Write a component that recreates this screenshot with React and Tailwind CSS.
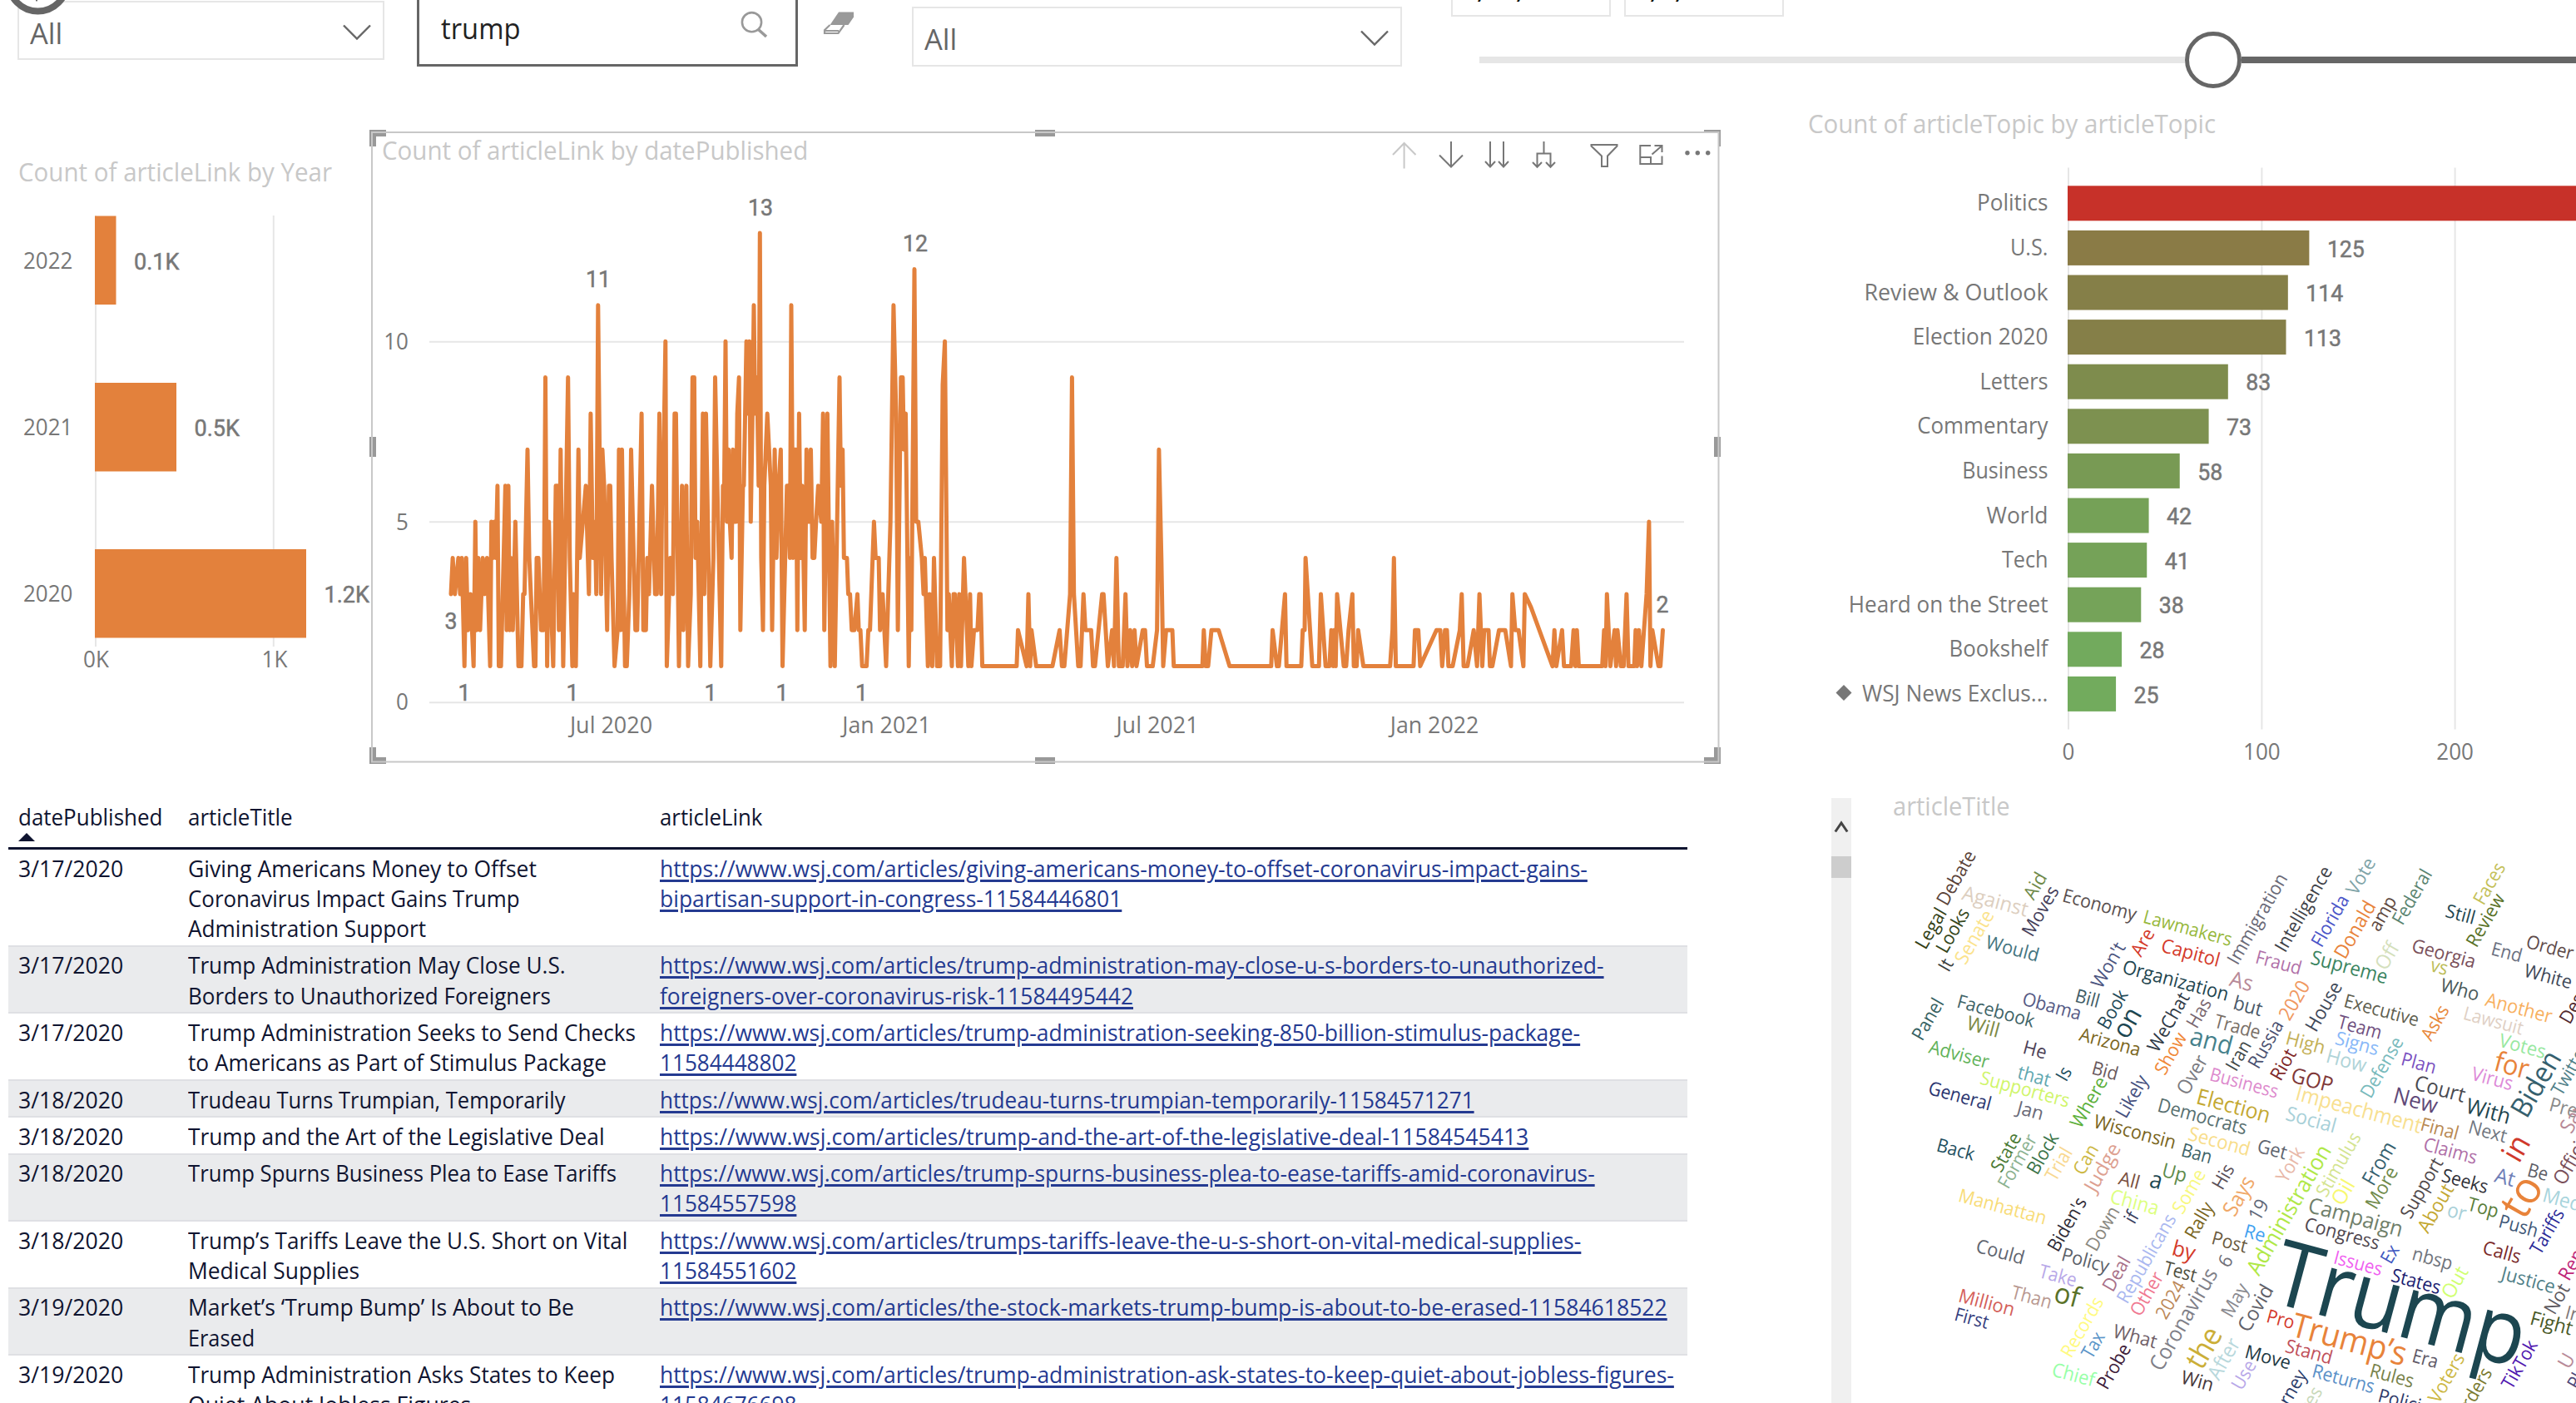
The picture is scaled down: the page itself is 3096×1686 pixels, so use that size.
import React, { useLayoutEffect, useRef, useState } from "react";

// Advance widths (em) of the report's UI typeface.
const ADV = {
  " ": 0.274, "&": 0.8, "'": 0.23, "’": 0.23, "‘": 0.23, ",": 0.217, "-": 0.4, ".": 0.217, "/": 0.39, ":": 0.217,
  A: 0.645, B: 0.573, C: 0.619, D: 0.701, E: 0.506, F: 0.488, G: 0.687, H: 0.71, I: 0.266, J: 0.357, K: 0.58, L: 0.471,
  M: 0.898, N: 0.748, O: 0.754, P: 0.56, Q: 0.754, R: 0.598, S: 0.531, T: 0.524, U: 0.687, V: 0.621, W: 0.934, X: 0.59,
  Y: 0.553, Z: 0.57,
  a: 0.509, b: 0.588, c: 0.462, d: 0.589, e: 0.523, f: 0.313, g: 0.589, h: 0.566, i: 0.242, j: 0.242, k: 0.497, l: 0.242,
  m: 0.861, n: 0.566, o: 0.586, p: 0.588, q: 0.589, r: 0.348, s: 0.424, t: 0.339, u: 0.566, v: 0.479, w: 0.723, x: 0.459,
  y: 0.484, z: 0.452,
};
const KERN = { Tr: -0.045, To: -0.06, Te: -0.06, Ta: -0.06, Tu: -0.04, Ye: -0.04, Yo: -0.05, Wo: -0.02, We: -0.02 };
const em = (s) => {
  let w = 0;
  for (let i = 0; i < s.length; i++) w += (ADV[s[i]] ?? 0.539) + (KERN[s.slice(i, i + 2)] ?? 0);
  return w;
};

// One line of text, condensed to the typeface's advance widths.
function Line({ children, className = "" }) {
  const ref = useRef(null);
  const [k, setK] = useState(1);
  useLayoutEffect(() => {
    const el = ref.current;
    const size = parseFloat(getComputedStyle(el).fontSize);
    setK((em(children) * size) / el.offsetWidth);
  }, [children]);
  return (
    <span className="block whitespace-nowrap">
      <span ref={ref} className={"inline-block origin-left " + className} style={{ transform: `scaleX(${k})` }}>
        {children}
      </span>
    </span>
  );
}

// SVG text in the UI typeface.
function T({ x, y, size = 27.6, anchor = "start", fill = "#777777", children }) {
  return (
    <text x={x} y={y} fontSize={size} textAnchor={anchor} fill={fill} textLength={em(children) * size} lengthAdjust="spacingAndGlyphs">
      {children}
    </text>
  );
}

// SVG data label in the numeric typeface.
function Num({ x, y, anchor = "start", children }) {
  const w = [...children].reduce((a, c) => a + (c === "." ? 7.5 : c === "K" ? 17 : 15), 0);
  return (
    <text
      x={x}
      y={y}
      fontSize="28"
      textAnchor={anchor}
      fill="#777777"
      stroke="#777777"
      strokeWidth="0.5"
      textLength={w}
      lengthAdjust="spacingAndGlyphs"
      className="font-['Roboto',sans-serif]"
    >
      {children}
    </text>
  );
}

function Chevron({ className }) {
  return (
    <svg className={className} width="34" height="20" viewBox="0 0 34 20" fill="none" stroke="#666666" strokeWidth="2.4">
      <path d="M1 1.5 17 17.5 33 1.5" />
    </svg>
  );
}

function Dropdown({ className }) {
  return (
    <div className={"flex shrink-0 items-start justify-between border-2 border-[#e6e6e6] bg-white pl-[13px] pr-[14px] " + className}>
      <div className="mt-[17px] text-[34.5px] leading-[40px] text-[#666666]">
        <Line>All</Line>
      </div>
      <Chevron className="mt-[26px]" />
    </div>
  );
}

function Header() {
  return (
    <div className="flex h-[110px] items-start">
      <div className="relative ml-[21px] shrink-0">
        <Dropdown className="mt-px h-[71px] w-[441px]" />
        <svg className="absolute left-[-16px] top-0" width="80" height="20" viewBox="5 0 80 20">
          <circle cx="45.5" cy="-21.5" r="35" fill="#fff" stroke="#666666" strokeWidth="8" />
          <rect x="43" y="0" width="2" height="1.4" fill="#666666" />
        </svg>
      </div>
      <div className="ml-[39px] flex h-[80px] w-[458px] shrink-0 items-start justify-between border-[3px] border-t-0 border-[#666666] pl-[26px] pr-[33px]">
        <div className="mt-[13px] text-[35.5px] leading-[40px] text-[#222222]">
          <Line>trump</Line>
        </div>
        <svg className="mt-[12px]" width="34" height="36" viewBox="889 12 34 36" fill="none" stroke="#999999">
          <circle cx="903.5" cy="26.7" r="11.6" strokeWidth="2.6" />
          <path d="M911.5 35.5 921 44" strokeWidth="3.6" />
        </svg>
      </div>
      <svg className="ml-[30px] mt-[13px] shrink-0" width="38" height="30" viewBox="989 13 38 30">
        <path d="M1008 14.5H1026V20.5L1019.5 30H997.5Z" fill="#999999" />
        <path d="M997.5 30 991 36.2V40H1007.5L1014.5 30M991 37H1008" fill="none" stroke="#999999" strokeWidth="2.2" />
      </svg>
      <Dropdown className="ml-[69px] mt-[8px] h-[72px] w-[589px]" />
      <div className="ml-[59px] flex w-[1352px] shrink-0 flex-col">
        <div className="flex h-[20px] gap-[16px] text-[32px] leading-[40px] text-black">
          {["3/17/2020", "6/1/2022"].map((d) => (
            <div key={d} className="h-[20px] w-[192px] overflow-hidden border-2 border-t-0 border-[#e6e6e6] pl-[14px]">
              <div className="-mt-[34px] flex">
                {[...d].map((c, i) =>
                  c === "/" ? (
                    <span key={i} className="w-[12.5px] translate-y-[4px] -skew-x-6">/</span>
                  ) : (
                    <span key={i} className="w-[17.2px]">{c}</span>
                  ),
                )}
              </div>
            </div>
          ))}
        </div>
        <div className="mt-[17px] flex h-[69px] items-center pl-[34px]">
          <div className="h-[8px] w-[848px] bg-[#e6e6e6]" />
          <div className="h-[68px] w-[68px] rounded-full border-[5px] border-[#666666] bg-white" />
          <div className="h-[8px] flex-1 bg-[#666666]" />
        </div>
      </div>
    </div>
  );
}

function YearChart() {
  const bars = [
    ["2022", 259.5, 25.5, "0.1K"],
    ["2021", 460, 98, "0.5K"],
    ["2020", 660, 254, "1.2K"],
  ];
  return (
    <div className="w-[444px] shrink-0">
      <div className="mb-[-1px] ml-[22px] mt-[76px] text-[31.2px] leading-[40px] text-[#c8c8c8]">
        <Line>Count of articleLink by Year</Line>
      </div>
      <svg width="446" height="600" viewBox="0 225 446 600" className="font-['Open_Sans','Noto_Sans',sans-serif]">
        <path d="M115 259V777M328.8 259V777" stroke="#e6e6e6" strokeWidth="2" />
        {bars.map(([year, y, w, v]) => (
          <g key={year}>
            <rect x="114" y={y} width={w} height="106.5" fill="#e3813c" />
            <T x={28} y={y + 63.2}>{year}</T>
            <Num x={114 + w + 21.5} y={y + 64}>{v}</Num>
          </g>
        ))}
        <T x={115.5} y={802} anchor="middle">0K</T>
        <T x={330} y={802} anchor="middle">1K</T>
      </svg>
    </div>
  );
}

// [x, count] pairs of the daily series, first in the 2020–early 2021 part.
const EARLY =
  "195:3 199:4 204:3 212:4 216:3 220:4 226:1 230:4 234:2 240:3 247:1 251:5 254:2 258:4 262:2 268:4 272:3 278:4 285:1 288:5 292:4 295:5 298:4 302:6 305:1 310:1 320:6 323:2 327:6 330:2 333:4 337:2 343:5 350:1 357:1 361:3 364:3 371:7 375:4 386:1 389:1 392:4 396:4 402:2 408:2 412:9 416:1 420:5 424:3 430:1 436:6 440:6 443:2 447:7 453:1 464:9 468:4 474:1 477:3 482:1 488:7 491:4 498:5 505:6 512:3 516:8 521:4 526:5 529:3 533:11 540:3 543:7 547:6 554:2 558:6 561:6 564:4 571:1 578:2 581:7 585:2 588:7 595:1 599:1 605:3 609:7 619:2 623:2 633:8 637:2 643:2 646:4 650:3 657:6 664:3 668:3 674:8 678:3 681:7 684:7 688:10 691:1 699:4 705:3 709:8 712:8 719:1 726:6 729:2 736:6 740:1 746:3 750:9 754:9 757:4 761:5 768:1 774:8 777:3 781:8 791:1 798:4 802:9 807:6 816:1 820:6 823:6 826:10 829:5 833:7 836:5 840:4 843:7 847:5 850:5 853:8 857:9 860:2 866:6 868:6 874:10 878:8 881:10 884:5 888:8 891:11 894:8 898:9 902:6 905:13 908:4 912:2 915:6 922:8 930:6 933:2 939:7 943:4 948:6 953:7 957:1 967:6 970:6 974:4 977:11 981:4 984:7 988:7 991:2 995:8 999:4 1002:6 1008:2 1012:7 1017:5 1022:7 1026:4 1030:4 1034:5 1039:6 1046:5 1050:8 1053:2 1060:8 1067:1 1071:5 1077:1 1088:9 1091:6 1095:7 1098:4 1105:4 1108:3 1112:3 1116:2 1122:2 1129:3 1132:2 1136:2 1140:1 1150:1 1154:2 1158:2 1167:5 1171:4 1178:4 1181:2 1187:3 1195:1 1205:5 1212:11 1218:8 1222:2 1229:9 1233:9 1236:7 1240:8 1247:1 1250:4 1253:2 1260:12 1264:5 1269:5 1277:4 1281:3 1284:4 1291:1 1295:3 1301:1 1305:4 1312:1 1319:1 1325:8.8 1330:10 1336:2 1339:3 1346:1 1350:3 1353:3 1360:1 1363:3 1367:1 1374:4 1384:1 1388:3 1391:1 1397:2 1405:2 1409:3 1412:3 1416:1";
const LATE =
  "0:1 37:1 41:2 59:1 62:3 66:1 69:2 79:1 113:1 128:2 133:1 138:1 150:3 154:9 158:3 167:1 172:1 178:3 182:2 194:2 198:1 202:1 217:3 220:3 229:1 238:2 242:1 247:4 252:1 260:1 266:3 270:1 276:2 280:1 285:2 289:1 302:2 307:2 311:1 323:1 332:2 336:7 341:4 345:1 351:2 364:2 367:1 427:1 430:2 434:1 439:1 446:2 461:2 484:1 571:1 574:2 583:1 587:1 600:3 603:1 634:1 637:2 641:2 643:4 657:1 671:1 675:3 685:1 693:1 697:2 701:1 703:2 706:1 709:3 723:1 728:1 733:2 741:3 744:1 750:1 753:2 764:1 820:1 825:2 828:4 832:1 869:1 872:2 879:2 883:1 917:2 925:2 929:1 935:2 939:2 942:1 951:1 966:2 970:3 974:1 982:1 995:2 1002:1 1007:3 1013:1 1017:2 1026:2 1029:1 1034:1 1048:2 1061:2 1073:1 1076:3 1082:2 1089:2 1099:1 1102:3 1115:2.63 1160:1 1164:2 1168:1 1180:2 1184:1 1199:1 1204:2 1208:1 1211:2 1215:1 1264:1 1268:2 1271:1 1274:3 1281:1 1290:2 1293:1 1296:2 1303:1 1309:1 1315:3 1319:1 1331:1 1334:2 1337:1 1341:2 1346:1 1357:3 1362:5 1365:1 1369:2 1382:1 1386:1 1391:2";
const MID = "1495:1 1498:2 1518:1 1522:3 1526:1 1529:2 1540:1";
const series = (s, x0, k) =>
  s.split(" ").map((p) => {
    const [x, v] = p.split(":").map(Number);
    return `${(x0 + x / k).toFixed(1)},${(844 - v * 43.38).toFixed(1)}`;
  });
const POINTS = [
  ...series(EARLY, 440, 1.912),
  ...series(MID, 440, 1.912),
  ...series(LATE, 1200, 1.742).filter((p) => parseFloat(p) > 1246),
].join(" ");

function ToolIcons() {
  return (
    <g fill="none" stroke="#777777" strokeWidth="2">
      <path d="M1687.6 202.5V172M1674 186 1687.6 172 1701.5 186" stroke="#c8c8c8" />
      <path d="M1744 170V200.5M1730 186.5 1744 200.5 1758 186.5" />
      <path d="M1791 170V200M1785 194 1791 200.5 1797 194M1807 170V200M1801 194 1807 200.5 1813 194" />
      <path d="M1855.5 170V184.5M1847.5 201V184.5H1863.5V201M1842 195 1847.5 200.8 1853 195M1858 195 1863.5 200.8 1869 195" />
      <path d="M1912.5 174H1943.5V175.5L1932 187.5V200H1925V187.5L1912.5 175.5Z" />
      <path d="M1984 175H1971.3V197H1997.5V187.5M1971.3 189H1984V197M1985.5 185.5 1997 175.5M1988.5 175H1997.5V183" />
      <g fill="#777777" stroke="none">
        <circle cx="2028" cy="183.7" r="2.7" />
        <circle cx="2040.3" cy="183.7" r="2.7" />
        <circle cx="2052.7" cy="183.7" r="2.7" />
      </g>
    </g>
  );
}

function LineChart() {
  return (
    <svg className="mt-[44px] shrink-0 font-['Open_Sans','Noto_Sans',sans-serif]" width="1626" height="768" viewBox="444 154 1626 768">
      <path
        fill="#999999"
        d="M444 156H464V164H452V176H444ZM1244 156H1268V164H1244ZM2048 156H2068V176H2065V158H2048ZM444 525H452V549H444ZM2060 525H2068V549H2060ZM444 898H452V910H464V918H444ZM1244 910H1268V918H1244ZM2048 910H2060V898H2068V918H2048Z"
      />
      <rect x="447" y="159" width="1618.5" height="756.5" fill="none" stroke="#c8c8c8" strokeWidth="2" />
      <T x={459} y={191.9} size={31.15} fill="#c8c8c8">Count of articleLink by datePublished</T>
      <ToolIcons />
      <path d="M516 410.8H2024M516 627.3H2024M516 844.3H2024" stroke="#e6e6e6" strokeWidth="2" />
      <T x={491} y={420} anchor="end">10</T>
      <T x={491} y={636.5} anchor="end">5</T>
      <T x={491} y={853} anchor="end">0</T>
      <polyline points={POINTS} fill="none" stroke="#e3813c" strokeWidth="5" strokeLinejoin="round" strokeLinecap="round" />
      <T x={734.5} y={881} anchor="middle">Jul 2020</T>
      <T x={1065.5} y={881} anchor="middle">Jan 2021</T>
      <T x={1391} y={881} anchor="middle">Jul 2021</T>
      <T x={1724} y={881} anchor="middle">Jan 2022</T>
      {[
        ["13", 914, 259], ["12", 1100, 302], ["11", 719, 345], ["3", 542, 755.7], ["2", 1998, 736],
        ["1", 558, 841.6], ["1", 688, 841.6], ["1", 854, 841.6], ["1", 940, 841.6], ["1", 1035.5, 841.6],
      ].map(([t, x, y]) => (
        <Num key={x} x={x} y={y} anchor="middle">{t}</Num>
      ))}
    </svg>
  );
}

const ROWS = [
  ["3/17/2020", ["Giving Americans Money to Offset", "Coronavirus Impact Gains Trump", "Administration Support"], ["giving-americans-money-to-offset-coronavirus-impact-gains-", "bipartisan-support-in-congress-11584446801"]],
  ["3/17/2020", ["Trump Administration May Close U.S.", "Borders to Unauthorized Foreigners"], ["trump-administration-may-close-u-s-borders-to-unauthorized-", "foreigners-over-coronavirus-risk-11584495442"]],
  ["3/17/2020", ["Trump Administration Seeks to Send Checks", "to Americans as Part of Stimulus Package"], ["trump-administration-seeking-850-billion-stimulus-package-", "11584448802"]],
  ["3/18/2020", ["Trudeau Turns Trumpian, Temporarily"], ["trudeau-turns-trumpian-temporarily-11584571271"]],
  ["3/18/2020", ["Trump and the Art of the Legislative Deal"], ["trump-and-the-art-of-the-legislative-deal-11584545413"]],
  ["3/18/2020", ["Trump Spurns Business Plea to Ease Tariffs"], ["trump-spurns-business-plea-to-ease-tariffs-amid-coronavirus-", "11584557598"]],
  ["3/18/2020", ["Trump’s Tariffs Leave the U.S. Short on Vital", "Medical Supplies"], ["trumps-tariffs-leave-the-u-s-short-on-vital-medical-supplies-", "11584551602"]],
  ["3/19/2020", ["Market’s ‘Trump Bump’ Is About to Be", "Erased"], ["the-stock-markets-trump-bump-is-about-to-be-erased-11584618522"]],
  ["3/19/2020", ["Trump Administration Asks States to Keep", "Quiet About Jobless Figures"], ["trump-administration-ask-states-to-keep-quiet-about-jobless-figures-", "11584676698"]],
];

function Table() {
  return (
    <div className="ml-[10px] w-[2018px] text-[27.7px] leading-[36.3px] text-[#0f1430]">
      <div className="grid h-[62px] grid-cols-[204px_567px_1fr] border-b-[3px] border-[#0f1430] pl-[12px] pt-[4px]">
        <div>
          <Line>datePublished</Line>
          <svg width="20" height="10" viewBox="0 0 20 10" className="mt-[2px] block">
            <path d="M0 10 10 0 20 10Z" fill="#0f1430" />
          </svg>
        </div>
        <Line>articleTitle</Line>
        <Line>articleLink</Line>
      </div>
      {ROWS.map(([date, title, link], i) => (
        <div
          key={i}
          className={"grid grid-cols-[204px_567px_1fr] border-b-2 border-[#dfe0e4] pb-[2.5px] pl-[12px] pt-[3.5px] " + (i % 2 ? "bg-[#eaebed]" : "bg-white")}
        >
          <Line>{date}</Line>
          <div>{title.map((l) => <Line key={l}>{l}</Line>)}</div>
          <div className="text-[#243a91]">
            {link.map((l, j) => (
              <Line key={l} className="underline decoration-[2.5px] underline-offset-[2.5px]">
                {(j === 0 ? "https://www.wsj.com/articles/" : "") + l}
              </Line>
            ))}
          </div>
        </div>
      ))}
    </div>
  );
}

const TOPICS = [
  ["Politics", 420, "#c73129"], ["U.S.", 125, "#8a7b46"], ["Review & Outlook", 114, "#857f48"], ["Election 2020", 113, "#857f48"],
  ["Letters", 83, "#7e8c4d"], ["Commentary", 73, "#7d9150"], ["Business", 58, "#789a54"], ["World", 42, "#75a157"],
  ["Tech", 41, "#75a258"], ["Heard on the Street", 38, "#75a359"], ["Bookshelf", 28, "#72aa5d"], ["WSJ News Exclus...", 25, "#72ab5d"],
];

function TopicChart() {
  return (
    <div>
      <div className="ml-[23px] mt-[17.5px] text-[31.1px] leading-[40px] text-[#c8c8c8]">
        <Line>Count of articleTopic by articleTopic</Line>
      </div>
      <svg className="block font-['Open_Sans','Noto_Sans',sans-serif]" width="946" height="752" viewBox="2150 167.5 946 752">
        <path d="M2486 201V876M2718.4 201V876M2950.6 201V876" stroke="#e6e6e6" strokeWidth="2" />
        {TOPICS.map(([name, v, c], i) => {
          const y = 222.8 + i * 53.6;
          return (
            <g key={name}>
              <rect x="2485" y={y} width={v * 2.323} height="42" fill={c} />
              <T x={2461.5} y={y + 30} anchor="end">{name}</T>
              {i > 0 && <Num x={2485 + v * 2.323 + 21.5} y={y + 31.6}>{String(v)}</Num>}
            </g>
          );
        })}
        <path d="M2206.5 832 2216 822.5 2225.5 832 2216 841.5Z" fill="#777777" />
        <T x={2486} y={912} anchor="middle">0</T>
        <T x={2718.4} y={912} anchor="middle">100</T>
        <T x={2950.6} y={912} anchor="middle">200</T>
      </svg>
    </div>
  );
}

// Word cloud: four quadrants on a third-of-a-pixel grid.
// word, x, y of the baseline start, direction (d = down-right 15°, u = up-right 60°), size, colour
const NW = [
  ["Legal", 405, 603, "u", 22.5, "#343f16"], ["Debate", 482, 445, "u", 22.5, "#5a4238"], ["Looks", 480, 617, "u", 22.5, "#34461a"],
  ["It", 488, 684, "u", 22.5, "#3a4040"], ["Senate", 549, 657, "u", 23.5, "#fbe38c"], ["Against", 530, 422, "d", 24.5, "#ddcfc0"],
  ["Aid", 793, 428, "u", 22.5, "#6f8a4a"], ["Moves", 790, 557, "u", 22.5, "#45405a"], ["Economy", 897, 430, "d", 22.5, "#5a5050"],
  ["Lawmakers", 1188, 507, "d", 22.5, "#97b83c"], ["Would", 616, 597, "d", 22.5, "#45757f"], ["Are", 1180, 633, "u", 22.5, "#d43a2a"],
  ["Capitol", 1253, 611, "d", 23, "#d43a2a"], ["Won't", 1037, 748, "u", 22.5, "#4c5580"], ["Organization", 1113, 688, "d", 23, "#1f4650"],
  ["Bill", 943, 792, "d", 22.5, "#3f5c66"], ["Obama", 752, 803, "d", 22.5, "#555a85"], ["Book", 1062, 892, "u", 22.5, "#1f4a58"],
  ["on", 1133, 925, "u", 32, "#1c4650"], ["Arizona", 953, 930, "d", 22.5, "#7a6520"], ["Facebook", 517, 812, "d", 22.5, "#3f6468"],
  ["Will", 547, 890, "d", 24, "#7e8a46"], ["Panel", 393, 932, "u", 22.5, "#35605f"], ["Adviser", 411, 975, "d", 22.7, "#62b35a"],
  ["He", 755, 978, "d", 23, "#4e4258"], ["that", 735, 1068, "d", 22.8, "#5fa8b0"], ["Is", 912, 1079, "u", 22.5, "#1f5060"],
  ["Bid", 1003, 1052, "d", 22.5, "#6a5a5e"], ["Supporters", 600, 1088, "d", 22.8, "#d0f56a"], ["General", 413, 1125, "d", 22.8, "#2a3570"],
  ["Jan", 728, 1194, "d", 22.5, "#6a6a78"], ["Where", 962, 1252, "u", 23, "#5cb03a"], ["Likely", 1127, 1212, "u", 22.5, "#45507e"],
  ["Over", 1350, 1128, "u", 24, "#7a7a80"], ["Show", 1268, 1056, "u", 22.5, "#f08838"], ["WeChat", 1240, 978, "u", 22.5, "#2f3a46"],
  ["Has", 1383, 888, "u", 22.5, "#7a6870"], ["and", 1357, 946, "d", 31, "#45818b"],
];
const NE = [
  ["Business", 48, 1075, "d", 22.5, "#dd8acd"], ["Election", 0, 1159, "d", 26.2, "#c4a832"], ["Immigration", 150, 658, "u", 22.5, "#6a6a78"],
  ["Intelligence", 322, 613, "u", 22.5, "#3f4248"], ["Florida", 453, 595, "u", 22.5, "#4a55c8"], ["Vote", 577, 412, "u", 22.8, "#80a4a8"],
  ["Donald", 538, 638, "u", 23.7, "#e8833a"], ["amp", 660, 538, "u", 22.5, "#5e4840"], ["Federal", 745, 515, "u", 22.5, "#5a8470"],
  ["Faces", 1037, 443, "u", 22.5, "#c4c058"], ["Review", 1012, 595, "u", 22.5, "#5a7228"], ["Still", 898, 486, "d", 22.5, "#1f4650"],
  ["Georgia", 776, 611, "d", 22.6, "#7a505a"], ["vs", 839, 680, "d", 23, "#bcbc58"], ["End", 1063, 622, "d", 22.5, "#6a7080"],
  ["Order", 1189, 597, "d", 22.6, "#5e4a4a"], ["White", 1177, 700, "d", 22.5, "#404858"], ["Who", 875, 752, "d", 22.7, "#4a5a5a"],
  ["Another", 1037, 805, "d", 23, "#f8b060"], ["Lawsuit", 962, 855, "d", 22.5, "#e0d0c4"], ["Despite", 1348, 872, "u", 22.5, "#50282e"],
  ["Off", 686, 678, "u", 24, "#d4e0bc"], ["Fraud", 213, 652, "d", 22.5, "#b070a8"], ["Supreme", 412, 655, "d", 24, "#3a8460"],
  ["As", 115, 733, "d", 26, "#b88a98"], ["but", 133, 818, "d", 23.5, "#4a5868"], ["2020", 338, 860, "u", 23.5, "#f09860"],
  ["House", 433, 900, "u", 23, "#404858"], ["Executive", 532, 810, "d", 22.5, "#606050"], ["Trade", 60, 883, "d", 23, "#7a7068"],
  ["Team", 505, 885, "d", 22.8, "#705080"], ["Asks", 846, 937, "u", 22.5, "#e8883a"], ["High", 322, 945, "d", 22.8, "#c4b058"],
  ["Signs", 500, 945, "d", 22.7, "#88b8f8"], ["How", 468, 1010, "d", 24.2, "#b0d4d8"], ["Russia", 225, 1033, "u", 22.5, "#4a5070"],
  ["Iran", 145, 1042, "u", 22.5, "#3f4848"], ["Riot", 305, 1077, "u", 22.5, "#802828"], ["GOP", 341, 1081, "d", 25.5, "#803838"],
  ["Defense", 630, 1140, "u", 22.5, "#78babc"], ["Plan", 738, 1020, "d", 22.7, "#7a50c0"], ["Court", 786, 1108, "d", 25.3, "#4a4a50"],
  ["New", 710, 1155, "d", 27, "#604878"], ["Virus", 987, 1072, "d", 23, "#dd8ad8"], ["Votes", 1086, 952, "d", 23, "#98e8a0"],
  ["for", 1074, 1040, "d", 33.5, "#e8833a"], ["Biden", 1194, 1210, "u", 34.3, "#35606e"], ["Twitter", 1316, 1135, "u", 22.5, "#508088"],
  ["President", 1272, 1185, "d", 23.5, "#8a8a8a"], ["With", 967, 1191, "d", 26, "#1f4650"], ["Impeachment", 358, 1146, "d", 25.7, "#f8e090"],
];
const SW = [
  ["Democrats", 1240, 47, "d", 23.2, "#587070"], ["Wisconsin", 1005, 104, "d", 22.8, "#7a6520"], ["Second", 1350, 150, "d", 23.4, "#f8dd8a"],
  ["Ban", 1325, 208, "d", 22.7, "#3f6468"], ["Up", 1256, 281, "d", 23.5, "#5c8a4a"], ["All", 1095, 308, "d", 22.5, "#7a5040"],
  ["a", 1212, 319, "d", 29, "#1c4650"], ["Can", 974, 277, "u", 22.5, "#cdb844"], ["Judge", 1015, 343, "u", 24, "#dda090"],
  ["Trial", 872, 303, "u", 23, "#f8d890"], ["Block", 808, 275, "u", 22.5, "#3a7448"], ["Former", 703, 326, "u", 22.5, "#8cb290"],
  ["State", 677, 267, "u", 22.5, "#4a7a34"], ["Back", 443, 190, "d", 22.7, "#1f5060"], ["Manhattan", 522, 372, "d", 22.6, "#f8dc78"],
  ["Biden's", 882, 553, "u", 22.5, "#2e2a35"], ["Down", 1020, 552, "u", 22.5, "#8a8880"], ["if", 1158, 452, "u", 22.5, "#3a3f60"],
  ["China", 1068, 376, "d", 24, "#ddff80"], ["Republicans", 1132, 740, "u", 22.5, "#aab8f0"], ["Some", 1332, 417, "u", 23, "#f8f880"],
  ["Could", 585, 554, "d", 22.8, "#606570"], ["Policy", 893, 585, "d", 22.7, "#5a6068"], ["Take", 808, 644, "d", 23, "#b8a8e8"],
  ["Than", 708, 720, "d", 22.8, "#b89890"], ["of", 867, 733, "d", 34, "#5a7228"], ["Deal", 1080, 697, "u", 22.5, "#a87088"],
  ["Million", 522, 733, "d", 22.8, "#d4605a"], ["First", 508, 800, "d", 22.5, "#35407e"], ["by", 1292, 565, "d", 26, "#d43a2a"],
  ["Rally", 1377, 508, "u", 22.5, "#7a6520"], ["Test", 1258, 632, "d", 22.8, "#50503f"], ["2024", 1272, 797, "u", 22.5, "#bc8858"],
  ["Other", 1180, 786, "u", 22.5, "#f07890"], ["Coronavirus", 1256, 983, "u", 26, "#808088"], ["Records", 930, 935, "u", 22.5, "#fffa80"],
  ["Tax", 1003, 943, "u", 22.7, "#5a94c8"], ["What", 1075, 860, "d", 22.8, "#706068"], ["Chief", 859, 1000, "d", 23.2, "#98ffa8"],
  ["Probe", 1060, 1050, "u", 22.5, "#40203a"], ["the", 1403, 977, "u", 36, "#cbae38"], ["Win", 1320, 1026, "d", 22.7, "#46383c"],
];
const SE = [
  ["Social", 322, 78, "d", 24, "#a8d0d8"], ["Get", 219, 194, "d", 23.2, "#606570"], ["York", 325, 308, "u", 23, "#e8b8a8"],
  ["His", 95, 330, "u", 22.5, "#5a5058"], ["Says", 140, 426, "u", 26, "#f0a868"], ["19", 228, 443, "u", 23.5, "#606878"],
  ["Re", 172, 500, "d", 22.7, "#40a0f0"], ["Administration", 225, 643, "u", 27, "#b0e848"], ["Stimulus", 470, 356, "u", 22.6, "#d4e490"],
  ["Oil", 530, 387, "u", 25, "#f8f870"], ["From", 640, 315, "u", 24.5, "#35606e"], ["More", 650, 400, "u", 23, "#708a4a"],
  ["Campaign", 403, 410, "d", 26, "#70806a"], ["Congress", 389, 475, "d", 22.7, "#504850"], ["Post", 55, 525, "d", 22.7, "#6a5a40"],
  ["6", 118, 610, "u", 23, "#707078"], ["May", 128, 790, "u", 22.5, "#8a8a90"], ["Covid", 191, 843, "u", 24.2, "#606068"],
  ["After", 80, 1020, "u", 24.5, "#b8d8dc"], ["Use", 165, 1052, "u", 22.5, "#b8a8e8"], ["Move", 175, 935, "d", 22.5, "#1f3a44"],
  ["Attorney", 271, 1219, "u", 22.5, "#2a3c6a"], ["Figures", 351, 1238, "u", 22.5, "#c8d8b8"], ["Pro", 253, 807, "d", 22.6, "#d4382a"],
  ["Trump’s", 336, 855, "d", 40.4, "#e8833a"], ["Trump", 258, 731, "d", 109, "#1c4650"], ["Issues", 495, 595, "d", 22.7, "#f060f0"],
  ["Ex", 703, 597, "u", 22.5, "#4058c0"], ["nbsp", 778, 582, "d", 22.8, "#70747c"], ["States", 702, 660, "d", 22.7, "#1a2070"],
  ["Out", 925, 723, "u", 24, "#d0ff70"], ["About", 835, 490, "u", 23.2, "#c4a832"], ["Support", 774, 434, "u", 22.5, "#50484a"],
  ["Seeks", 884, 300, "d", 22.7, "#303038"], ["Top", 973, 402, "d", 23, "#5a7e3a"], ["or", 904, 425, "d", 24.5, "#a8d0d8"],
  ["Claims", 818, 187, "d", 22.8, "#b070a8"], ["Final", 808, 115, "d", 22.7, "#b88850"], ["Next", 980, 125, "d", 22.7, "#707680"],
  ["in", 1166, 230, "u", 37, "#d0392b"], ["At", 1070, 300, "d", 25, "#7080b8"], ["Be", 1193, 280, "d", 22.7, "#606068"],
  ["to", 1187, 434, "u", 53, "#e8833a"], ["Media", 1248, 372, "d", 24, "#a8d4dc"], ["Push", 1090, 465, "d", 22.7, "#405878"],
  ["Tariffs", 1240, 567, "u", 22.5, "#2a2a98"], ["Calls", 1032, 560, "d", 22.8, "#7a2828"], ["Justice", 1094, 652, "d", 22.8, "#508088"],
  ["Not", 1293, 780, "u", 22.7, "#5e5a60"], ["Report", 1345, 657, "u", 23, "#c02878"], ["Fight", 1203, 815, "d", 23.4, "#4a5a28"],
  ["Into", 1330, 793, "d", 22.7, "#807878"], ["TikTok", 1137, 1053, "u", 22.5, "#5018b0"], ["U", 1345, 975, "u", 24, "#b88a98"],
  ["Plans", 1376, 1049, "u", 22.5, "#504878"], ["Officials", 1328, 313, "u", 24, "#7a505a"], ["Says", 1354, 126, "u", 25, "#b88a98"],
  ["Stand", 320, 915, "d", 22.8, "#c0505a"], ["Era", 778, 950, "d", 23, "#605a68"], ["Returns", 417, 1005, "d", 22.8, "#5a90c8"],
  ["Rules", 625, 1003, "d", 22.9, "#78824a"], ["Policies", 655, 1093, "d", 22.7, "#2f3a6a"], ["Voters", 873, 1103, "u", 22.7, "#cdb844"],
  ["Orders", 969, 1160, "u", 22.7, "#7a7a30"],
];
const WORDS = [
  [2180, 940, NW], [2640, 940, NE], [2180, 1320, SW], [2640, 1320, SE],
].flatMap(([ox, oy, list]) => list.map(([w, x, y, dir, size, fill]) => ({ w, x: ox + x / 3, y: oy + y / 3, dir, size, fill })));

function WordCloud() {
  return (
    <svg className="block font-['Open_Sans','Noto_Sans',sans-serif]" width="856" height="691" viewBox="2240 995 856 691">
      {WORDS.map(({ w, x, y, dir, size, fill }, i) => (
        <text
          key={i}
          transform={`translate(${x} ${y}) rotate(${dir === "d" ? 15 : -60})`}
          x={/^[ATVWYvJ]/.test(w) ? 0 : -0.07 * size}
          fontSize={size}
          fill={fill}
          textLength={em(w) * size}
          lengthAdjust="spacingAndGlyphs"
        >
          {w}
        </text>
      ))}
    </svg>
  );
}

export default function App() {
  return (
    <div className="flex h-[1686px] w-[3096px] flex-col overflow-hidden bg-white font-['Open_Sans','Noto_Sans',sans-serif]">
      <Header />
      <div className="flex h-[1576px]">
        <div className="flex w-[2150px] shrink-0 flex-col">
          <div className="flex h-[849px]">
            <YearChart />
            <LineChart />
          </div>
          <div className="h-[727px] overflow-hidden">
            <Table />
          </div>
        </div>
        <div className="flex flex-1 flex-col">
          <div className="h-[849px]">
            <TopicChart />
          </div>
          <div className="flex">
            <div className="ml-[51px] flex h-[727px] w-[24px] flex-col items-center bg-[#f0f0f0]">
              <svg className="mt-[26px] shrink-0" width="18" height="16" viewBox="0 0 18 16" fill="none" stroke="#444444" strokeWidth="3">
                <path d="M1.8 14.5 9 4 16.2 14.5" />
              </svg>
              <div className="mt-[28px] h-[26px] w-[24px] bg-[#cdcdcd]" />
            </div>
            <div className="ml-[15px]">
              <div className="-mt-[11px] ml-[35px] h-[47px] text-[31px] leading-[40px] text-[#c8c8c8]">
                <Line>articleTitle</Line>
              </div>
              <WordCloud />
            </div>
          </div>
        </div>
      </div>
    </div>
  );
}
